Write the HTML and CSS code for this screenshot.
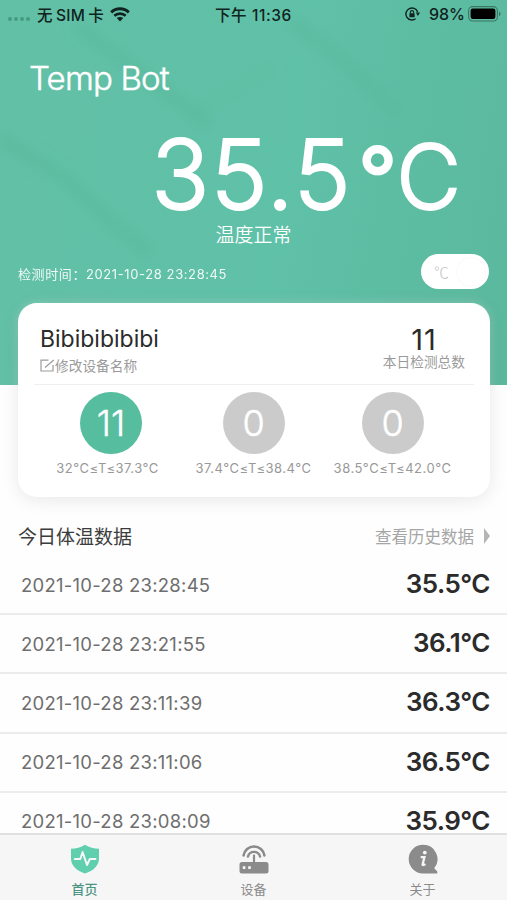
FILE: index.html
```html
<!DOCTYPE html>
<html lang="zh-CN">

<head>
  <meta charset="UTF-8" />
  <title>Temp Bot</title>
  <link rel="stylesheet" href="styles.css">
</head>

<body>
  <div class="hero">
    <svg class="hero-bg" viewBox="0 0 507 385" preserveAspectRatio="none">
      <defs>
        <filter id="soft" x="-20%" y="-20%" width="140%" height="140%">
          <feGaussianBlur stdDeviation="6" />
        </filter>
      </defs>
      <g filter="url(#soft)" fill="none" stroke="#55b596" stroke-width="15" stroke-opacity="0.35">
        <path d="M290 20 L345 62 L400 115" />
        <path d="M75 25 L210 125" />
        <path d="M0 138 L60 175 L150 255" />
        <path d="M190 115 L275 65" stroke-opacity="0.15" />
      </g>
    </svg>

    <div class="status-bar">
      <div class="status-left">
        <span class="dots"><i></i><i></i><i></i><i></i></span>
        <span class="carrier">无 SIM 卡</span>
        <svg class="wifi" width="20" height="15" viewBox="0 0 20 15">
          <path d="M1.2 5.3 C6 0.7 14 0.7 18.8 5.3" fill="none" stroke="#10231d" stroke-width="3" />
          <path d="M4.3 8.8 C7.5 5.9 12.5 5.9 15.7 8.8" fill="none" stroke="#10231d" stroke-width="2.7" />
          <path d="M6.8 11 C8.6 9.5 11.4 9.5 13.2 11 L10 14.5 Z" fill="#10231d" />
        </svg>
      </div>
      <div class="status-time">下午 11:36</div>
      <div class="status-right">
        <svg width="15" height="14" viewBox="0 0 15 14">
          <path d="M12.6 5 A6 6 0 1 0 10.6 11.7" fill="none" stroke="#10231d" stroke-width="1.4" />
          <path d="M10.8 5.6 L15 5.6 L12.9 9 Z" fill="#10231d" />
          <rect x="4.4" y="6.2" width="5.2" height="4" rx="0.6" fill="#10231d" />
          <path d="M5.4 6.5 V5.2 A1.6 1.6 0 0 1 8.6 5.2 V6.5" fill="none" stroke="#10231d" stroke-width="1.1" />
        </svg>
        <span class="percent">98%</span>
        <svg width="33" height="16" viewBox="0 0 33 16">
          <rect x="0.6" y="0.6" width="28.8" height="14.4" rx="4" fill="none" stroke="#3b7763" stroke-width="1.1" />
          <rect x="2.6" y="2.6" width="24.8" height="10.4" rx="2.2" fill="#000" />
          <path d="M31 5.5 C33 6.3 33 9.3 31 10.1 Z" fill="#3b7763" />
        </svg>
      </div>
    </div>

    <h1 class="title">Temp Bot</h1>
    <div class="reading"><span class="value">35.5</span><span class="unit"><span class="degree">°</span>C</span></div>
    <div class="state">温度正常</div>
    <div class="check-row">
      <div class="check-time">检测时间：<span>2021-10-28 23:28:45</span></div>
      <div class="switch"><span class="switch-label">℃</span><span class="knob"></span></div>
    </div>
  </div>

  <div class="card">
    <div class="card-head">
      <div class="device">
        <div class="device-name">Bibibibibibi</div>
        <div class="device-edit">
          <svg width="15" height="13" viewBox="0 0 15 13" fill="none" stroke="#9b9b9b" stroke-width="1.2">
            <path d="M8.5 1.2 H1 V12 H13 V6" />
            <path d="M5 8.5 L13.8 1" />
          </svg>
          <span>修改设备名称</span>
        </div>
      </div>
      <div class="total">
        <div class="total-num">11</div>
        <div class="total-label">本日检测总数</div>
      </div>
    </div>
    <div class="levels">
      <div class="level">
        <div class="circle green">11</div>
        <div class="range">32°C≤T≤37.3°C</div>
      </div>
      <div class="level">
        <div class="circle">0</div>
        <div class="range">37.4°C≤T≤38.4°C</div>
      </div>
      <div class="level">
        <div class="circle">0</div>
        <div class="range">38.5°C≤T≤42.0°C</div>
      </div>
    </div>
  </div>

  <div class="list-head">
    <div class="list-title">今日体温数据</div>
    <div class="history"><span>查看历史数据</span><i class="arrow"></i></div>
  </div>

  <div class="list">
    <div class="row"><span class="date">2021-10-28 23:28:45</span><span class="temp">35.5°C</span></div>
    <div class="row"><span class="date">2021-10-28 23:21:55</span><span class="temp">36.1°C</span></div>
    <div class="row"><span class="date">2021-10-28 23:11:39</span><span class="temp">36.3°C</span></div>
    <div class="row"><span class="date">2021-10-28 23:11:06</span><span class="temp">36.5°C</span></div>
    <div class="row"><span class="date">2021-10-28 23:08:09</span><span class="temp">35.9°C</span></div>
  </div>

  <div class="tabbar">
    <div class="tab active">
      <svg width="30" height="30" viewBox="0 0 30 30">
        <path d="M15 0.8 C19 3.4 24 4.6 29 4.8 V14.5 C29 21.5 23.5 26.8 15 29.4 C6.5 26.8 1 21.5 1 14.5 V4.8 C6 4.6 11 3.4 15 0.8 Z" fill="#5fcfae" />
        <path d="M4.8 15 H10.3 L12.6 8 L17 21 L19.8 15 H25.5" fill="none" stroke="#f6f6f6" stroke-width="2" stroke-linejoin="round" stroke-linecap="round" />
      </svg>
      <span>首页</span>
    </div>
    <div class="tab">
      <svg width="30" height="30" viewBox="0 0 30 30">
        <path d="M4.6 11.5 A10.5 10.5 0 0 1 25.4 11.5" fill="none" stroke="#8b8b8b" stroke-width="2.6" stroke-linecap="round" />
        <path d="M9 12.5 A6.2 6.2 0 0 1 21 12.5" fill="none" stroke="#8b8b8b" stroke-width="2.4" stroke-linecap="round" />
        <path d="M15 11.5 V20" stroke="#8b8b8b" stroke-width="2.2" stroke-linecap="round" />
        <rect x="0.5" y="18" width="29" height="11.5" rx="2.5" fill="#8b8b8b" />
        <rect x="3.8" y="22.2" width="2.6" height="2.8" fill="#f6f6f6" />
        <rect x="9.2" y="22.2" width="2.6" height="2.8" fill="#f6f6f6" />
      </svg>
      <span>设备</span>
    </div>
    <div class="tab">
      <svg width="30" height="30" viewBox="0 0 30 30">
        <path d="M15 0.8 A14.3 14.3 0 1 0 15 29.4 H29.3 V27.4 L26.2 24.2 A14.3 14.3 0 0 0 15 0.8 Z" fill="#8b8b8b" />
        <circle cx="16.8" cy="8.6" r="1.9" fill="#f6f6f6" />
        <path d="M12.7 13.2 H16.4 L14.6 20.4 Q14.4 21.7 17.5 20.3" fill="none" stroke="#f6f6f6" stroke-width="2.3" />
      </svg>
      <span>关于</span>
    </div>
  </div>
</body>

</html>
```
FILE: styles.css
```css
* {
  box-sizing: border-box;
}

body {
  display: flex;
  flex-direction: column;
  height: 900px;
  margin: 0;
  overflow: hidden;
  background-color: #fefefe;
  font-family: Inter, "Noto Sans CJK SC", sans-serif;
}

.hero {
  position: relative;
  flex: none;
  height: 385px;
  background: linear-gradient(100deg, #62c0a6 0%, #5fc1a8 55%, #5ab89d 100%);
  color: #fff;
}

.hero-bg {
  position: absolute;
  top: 0;
  left: 0;
  width: 100%;
  height: 100%;
}

.status-bar {
  position: relative;
  display: grid;
  grid-template-columns: 1fr auto 1fr;
  align-items: center;
  height: 28px;
  padding: 0 8px;
  color: #10231d;
  font-size: 16px;
  font-weight: 500;
}

.status-left,
.status-right {
  display: flex;
  align-items: center;
}

.status-right {
  justify-content: flex-end;
}

.dots {
  display: flex;
  gap: 2px;
  padding-top: 10px;
}

.dots i {
  width: 4px;
  height: 4px;
  border-radius: 50%;
  background-color: #459b81;
}

.carrier {
  margin: 0 6px 0 7px;
  font-size: 15.5px;
  letter-spacing: 0.2px;
  word-spacing: -1px;
}

.status-time {
  font-size: 15.5px;
  letter-spacing: 0.6px;
}

.percent {
  margin: 0 3px 0 9px;
  font-size: 16px;
}

.status-right svg:last-child {
  margin-right: -2px;
}

.title {
  position: relative;
  margin: 30px 0 0 29px;
  font-size: 33px;
  font-weight: 300;
  line-height: 40px;
  letter-spacing: -0.8px;
  -webkit-text-stroke: 0.5px #fff;
}

.reading {
  position: relative;
  display: flex;
  justify-content: flex-end;
  align-items: baseline;
  height: 102px;
  margin-top: 25px;
  padding-right: 46px;
  font-weight: 300;
  line-height: 102px;
  -webkit-text-stroke: 2px #fff;
}

.value {
  font-size: 96px;
  letter-spacing: 1.4px;
}

.unit {
  margin-left: 6px;
  font-size: 89px;
}

.degree {
  font-size: 86px;
  font-weight: 400;
  letter-spacing: -1px;
}

.state {
  position: relative;
  font-size: 19px;
  font-weight: 350;
  line-height: 22px;
  text-align: center;
}

.check-row {
  position: relative;
  display: flex;
  justify-content: space-between;
  align-items: center;
  margin-top: 7px;
  padding: 0 18px;
}

.check-time {
  padding-top: 4px;
  font-size: 13px;
  letter-spacing: 0.6px;
  opacity: 0.9;
}

.switch {
  display: flex;
  align-items: center;
  justify-content: space-between;
  width: 68px;
  height: 35px;
  padding: 0 3px 0 13px;
  border-radius: 18px;
  background-color: #fff;
}

.switch-label {
  color: #c3c3c3;
  font-family: "Noto Sans CJK SC", sans-serif;
  font-size: 15px;
  font-weight: 300;
}

.knob {
  width: 30px;
  height: 30px;
  border-radius: 50%;
  border: 1px solid #fbfbfb;
}

.card {
  position: relative;
  flex: none;
  height: 194px;
  margin: -82px 17px 0 18px;
  border-radius: 19px;
  background-color: #fff;
  box-shadow: 0 3px 18px rgba(0, 0, 0, 0.09), 0 0 12px rgba(255, 255, 255, 0.3);
}

.card-head {
  display: flex;
  justify-content: space-between;
  height: 82px;
  margin: 0 16px;
  padding: 21px 9px 0 6px;
  border-bottom: 1px solid #eee;
}

.device-name {
  color: #2b2b2b;
  font-size: 23px;
  line-height: 30px;
}

.device-edit {
  display: flex;
  align-items: center;
  height: 22px;
  color: #9b9b9b;
  font-size: 13.7px;
}

.total {
  text-align: center;
}

.total-num {
  color: #2b2b2b;
  font-size: 29px;
  line-height: 32px;
  letter-spacing: 1px;
}

.total-label {
  color: #9b9b9b;
  font-size: 13.7px;
  line-height: 12px;
}

.levels {
  display: flex;
  gap: 22px;
  padding: 7px 0 0 31px;
}

.level {
  display: flex;
  flex-direction: column;
  align-items: center;
  width: 117px;
}

.level:first-child {
  margin-right: 7px;
}

.circle {
  width: 62px;
  height: 62px;
  border-radius: 50%;
  background-color: #cbcbcb;
  color: #fff;
  font-size: 36px;
  font-weight: 300;
  line-height: 62px;
  text-align: center;
  -webkit-text-stroke: 0.5px #fff;
}

.circle.green {
  margin-left: 7px;
  background-color: #56bd9e;
}

.range {
  margin-top: 5px;
  color: #999;
  font-size: 13px;
  line-height: 18px;
  letter-spacing: 0.5px;
  white-space: nowrap;
}

.list-head {
  flex: none;
  display: flex;
  justify-content: space-between;
  align-items: center;
  height: 59px;
  padding: 18px 17px 0 18px;
}

.list-title {
  color: #3c3c3c;
  font-size: 19px;
}

.history {
  display: flex;
  align-items: center;
  color: #a5a5a5;
  font-size: 16.5px;
}

.arrow {
  margin-left: 10px;
  border-left: 6px solid #b5b5b5;
  border-top: 8px solid transparent;
  border-bottom: 8px solid transparent;
}

.list {
  flex: 1;
  min-height: 0;
  overflow: hidden;
}

.row {
  display: flex;
  justify-content: space-between;
  align-items: center;
  height: 59.2px;
  padding: 0 17px 0 21px;
  border-bottom: 2px solid #ececec;
}

.date {
  color: #6e6e6e;
  font-size: 18.5px;
  letter-spacing: 0.25px;
}

.temp {
  margin-top: -2px;
  color: #2b2b2b;
  font-size: 26px;
  font-weight: 600;
  letter-spacing: -0.5px;
}

.tabbar {
  flex: none;
  display: flex;
  height: 67px;
  border-top: 2px solid #e0e0e0;
  background-color: #f6f6f6;
}

.tab {
  flex: 1;
  display: flex;
  flex-direction: column;
  align-items: center;
  padding-top: 9px;
  color: #8b8b8b;
  font-size: 13px;
}

.tab span {
  margin-top: 6px;
  line-height: 19px;
}

.tab.active {
  color: #4d9583;
  font-weight: 500;
}
```
